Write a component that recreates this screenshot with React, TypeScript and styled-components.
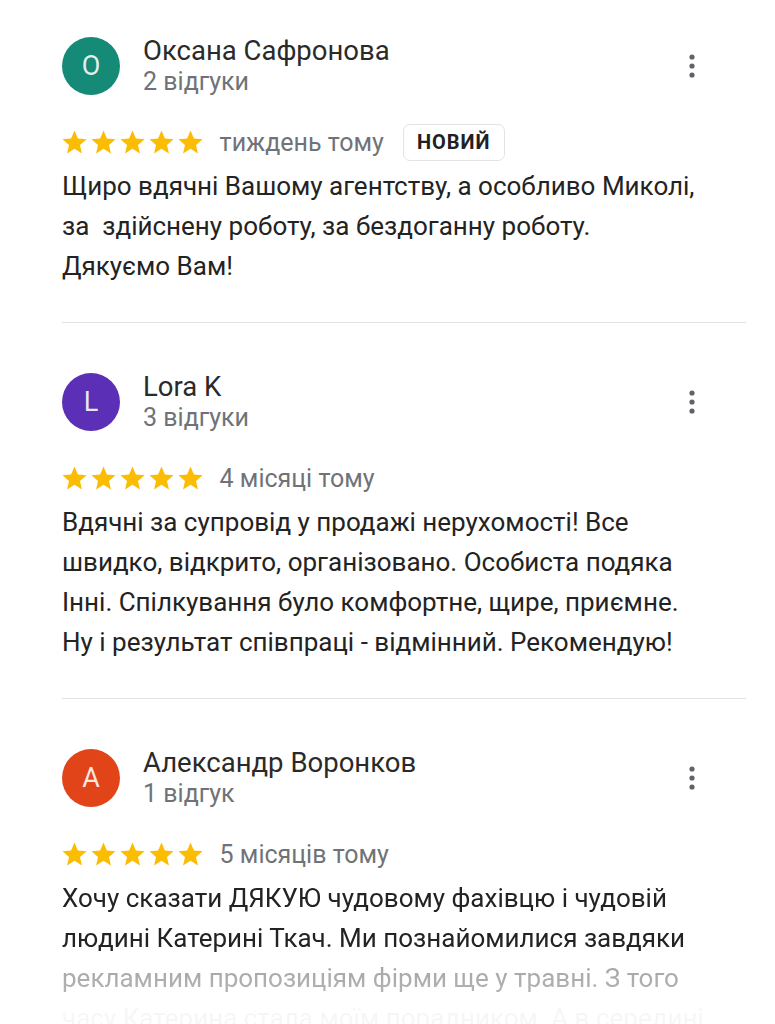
import React from "react";
import styled, { createGlobalStyle } from "styled-components";

const GlobalStyle = createGlobalStyle`
  body {
    margin: 0;
    background: #ffffff;
    font-family: Roboto, "Noto Sans", Arial, sans-serif;
  }
`;

type Review = {
  initial: string;
  color: string;
  name: string;
  count: string;
  time: string;
  isNew?: boolean;
  text: string[];
  faded?: boolean;
};

const reviews: Review[] = [
  {
    initial: "О",
    color: "#148a77",
    name: "Оксана Сафронова",
    count: "2 відгуки",
    time: "тиждень тому",
    isNew: true,
    text: [
      "Щиро вдячні Вашому агентству, а особливо Миколі,",
      "за\u00a0 здійснену роботу, за бездоганну роботу.",
      "Дякуємо Вам!",
    ],
  },
  {
    initial: "L",
    color: "#5b2fb6",
    name: "Lora K",
    count: "3 відгуки",
    time: "4 місяці тому",
    text: [
      "Вдячні за супровід у продажі нерухомості! Все",
      "швидко, відкрито, організовано. Особиста подяка",
      "Інні. Спілкування було комфортне, щире, приємне.",
      "Ну і результат співпраці - відмінний. Рекомендую!",
    ],
  },
  {
    initial: "A",
    color: "#e2441a",
    name: "Александр Воронков",
    count: "1 відгук",
    time: "5 місяців тому",
    faded: true,
    text: [
      "Хочу сказати ДЯКУЮ чудовому фахівцю і чудовій",
      "людині Катерині Ткач. Ми познайомилися завдяки",
      "рекламним пропозиціям фірми ще у травні. З того",
      "часу Катерина стала моїм порадником. А в середині",
    ],
  },
];

const Star = () => (
  <svg width="29" height="29" viewBox="0 0 24 24">
    <path
      fill="#fbbc04"
      d="M12 17.27L18.18 21l-1.64-7.03L22 9.24l-7.19-.61L12 2 9.19 8.63 2 9.24l5.46 4.73L5.82 21z"
    />
  </svg>
);

const MoreIcon = () => (
  <svg width="24" height="28" viewBox="0 0 24 28">
    <circle cx="12" cy="5" r="2.6" fill="#5f6368" />
    <circle cx="12" cy="14" r="2.6" fill="#5f6368" />
    <circle cx="12" cy="23" r="2.6" fill="#5f6368" />
  </svg>
);

const App = () => {
  return (
    <>
      <GlobalStyle />
      <Page>
        {reviews.map((r, i) => (
          <Card key={i} $last={i === reviews.length - 1}>
            <Header>
              <Avatar $bg={r.color}>{r.initial}</Avatar>
              <Author>
                <Name>{r.name}</Name>
                <Count>{r.count}</Count>
              </Author>
              <MenuButton aria-label="Більше">
                <MoreIcon />
              </MenuButton>
            </Header>
            <Meta>
              <Stars>
                {[0, 1, 2, 3, 4].map((s) => (
                  <Star key={s} />
                ))}
              </Stars>
              <Time>{r.time}</Time>
              {r.isNew && <Badge>НОВИЙ</Badge>}
            </Meta>
            <Body $faded={r.faded}>
              {r.text.map((line, j) => (
                <Line key={j}>{line}</Line>
              ))}
            </Body>
          </Card>
        ))}
      </Page>
    </>
  );
};

export default App;

const Page = styled.main`
  height: 1024px;
  overflow: hidden;
  padding: 0 29px 0 62px;
  box-sizing: border-box;
`;

const Card = styled.section<{ $last?: boolean }>`
  padding: 37px 0 36px;
  border-bottom: ${(p) => (p.$last ? "none" : "1px solid #e3e3e3")};

  & + & {
    padding-top: 50px;
  }
`;

const Header = styled.div`
  display: flex;
  align-items: center;
  gap: 23px;
  height: 58px;
`;

const Avatar = styled.div<{ $bg: string }>`
  width: 58px;
  height: 58px;
  border-radius: 50%;
  background: ${(p) => p.$bg};
  color: rgba(255, 255, 255, 0.88);
  display: flex;
  align-items: center;
  justify-content: center;
  font-size: 27px;
  flex-shrink: 0;
`;

const Author = styled.div`
  display: flex;
  flex-direction: column;
  gap: 1px;
  flex: 1;
  margin-top: 1px;
`;

const Name = styled.div`
  font-size: 27.5px;
  line-height: 30px;
  color: #2a2a2a;
`;

const Count = styled.div`
  font-size: 25px;
  line-height: 30px;
  color: #6f7378;
`;

const MenuButton = styled.button`
  border: none;
  background: none;
  padding: 0;
  margin-right: 42px;
  display: flex;
  align-items: center;
`;

const Meta = styled.div`
  display: flex;
  align-items: center;
  height: 38px;
  margin-top: 28px;
`;

const Stars = styled.div`
  display: flex;
  margin-left: -2.4px;
  margin-right: 15px;
`;

const Time = styled.span`
  font-size: 25px;
  color: #6f7378;
`;

const Badge = styled.span`
  margin-left: 19px;
  height: 37px;
  box-sizing: border-box;
  padding: 0 13px;
  border: 1px solid #e1e3e6;
  border-radius: 7px;
  display: flex;
  align-items: center;
  font-size: 20px;
  font-weight: 700;
  letter-spacing: 1px;
  color: #202124;
`;

const Body = styled.div<{ $faded?: boolean }>`
  margin-top: 5px;
  font-size: 26px;
  line-height: 40px;
  color: #232323;
  ${(p) =>
    p.$faded &&
    `
    -webkit-mask-image: linear-gradient(to bottom, #000 0, #000 80px, rgba(0,0,0,0.4) 90px, rgba(0,0,0,0.34) 116px, rgba(0,0,0,0.04) 126px);
    mask-image: linear-gradient(to bottom, #000 0, #000 80px, rgba(0,0,0,0.4) 90px, rgba(0,0,0,0.34) 116px, rgba(0,0,0,0.04) 126px);
  `}
`;

const Line = styled.div`
  white-space: nowrap;
`;
